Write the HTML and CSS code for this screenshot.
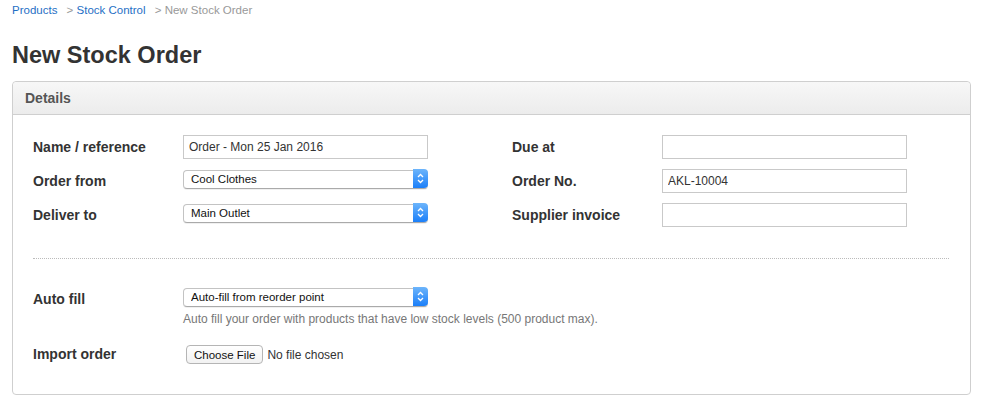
FILE: index.html
```html
<!DOCTYPE html>
<html>
<head>
<meta charset="utf-8">
<title>New Stock Order</title>
<link rel="stylesheet" href="styles.css">
</head>
<body>
<nav class="crumbs">
  <a class="crumb-link" href="#">Products</a>
  <span class="crumb"><span class="sep">&gt;</span> <a class="crumb-link" href="#">Stock Control</a></span>
  <span class="crumb current"><span class="sep">&gt;</span> New Stock Order</span>
</nav>
<h1 class="title">New Stock Order</h1>
<section class="panel">
  <header class="panel-head">Details</header>
  <div class="panel-body">
    <div class="grid">
      <div class="field">
        <label class="lbl">Name / reference</label>
        <input class="txt" type="text" value="Order - Mon 25 Jan 2016">
      </div>
      <div class="field">
        <label class="lbl">Due at</label>
        <input class="txt" type="text" value="">
      </div>
      <div class="field">
        <label class="lbl">Order from</label>
        <div class="sel"><select class="sel-box"><option>Cool Clothes</option></select><span class="sel-arrow"><svg width="7" height="11" viewBox="0 0 7 11"><path d="M1 4 L3.5 1.5 L6 4 M1 7 L3.5 9.5 L6 7" fill="none" stroke="#fff" stroke-width="1.3"/></svg></span></div>
      </div>
      <div class="field">
        <label class="lbl">Order No.</label>
        <input class="txt" type="text" value="AKL-10004">
      </div>
      <div class="field">
        <label class="lbl">Deliver to</label>
        <div class="sel"><select class="sel-box"><option>Main Outlet</option></select><span class="sel-arrow"><svg width="7" height="11" viewBox="0 0 7 11"><path d="M1 4 L3.5 1.5 L6 4 M1 7 L3.5 9.5 L6 7" fill="none" stroke="#fff" stroke-width="1.3"/></svg></span></div>
      </div>
      <div class="field">
        <label class="lbl">Supplier invoice</label>
        <input class="txt" type="text" value="">
      </div>
    </div>
    <hr class="divider">
    <div class="row">
      <label class="lbl lbl-row">Auto fill</label>
      <div class="ctl">
        <div class="sel"><select class="sel-box"><option>Auto-fill from reorder point</option></select><span class="sel-arrow"><svg width="7" height="11" viewBox="0 0 7 11"><path d="M1 4 L3.5 1.5 L6 4 M1 7 L3.5 9.5 L6 7" fill="none" stroke="#fff" stroke-width="1.3"/></svg></span></div>
        <p class="help">Auto fill your order with products that have low stock levels (500 product max).</p>
      </div>
    </div>
    <div class="row row-import">
      <label class="lbl lbl-row lbl-import">Import order</label>
      <div class="ctl file">
        <button class="file-btn" type="button">Choose File</button>
        <span class="file-name">No file chosen</span>
      </div>
    </div>
  </div>
</section>
</body>
</html>
```

FILE: styles.css
```css
html, body {
  margin: 0;
  padding: 0;
  background: #fff;
}
body {
  font-family: "Liberation Sans", Arial, Helvetica, sans-serif;
  color: #333;
  padding: 0 12px;
}
.crumbs {
  margin-top: 3px;
  height: 14px;
  line-height: 14px;
  font-size: 11.5px;
  white-space: nowrap;
}
.crumb-link {
  color: #1f6fc5;
  text-decoration: none;
}
.crumb {
  margin-left: 6px;
}
.sep {
  color: #999;
}
.current {
  color: #999;
}
.title {
  margin: 24px 0 0 0;
  font-size: 23.5px;
  line-height: 28px;
  font-weight: bold;
  color: #333;
}
.panel {
  margin-top: 12px;
  width: 959px;
  box-sizing: border-box;
  border: 1px solid #cfcfcf;
  border-radius: 4px;
}
.panel-head {
  height: 32px;
  line-height: 32px;
  padding-left: 12px;
  font-size: 14px;
  font-weight: bold;
  color: #555;
  background: linear-gradient(#f7f7f7, #ececec);
  border-bottom: 1px solid #cfcfcf;
  border-radius: 4px 4px 0 0;
}
.panel-body {
  padding: 20px 21px 30px 20px;
}
.grid {
  display: grid;
  grid-template-columns: 395px 395px;
  column-gap: 84px;
  row-gap: 10px;
}
.field {
  display: flex;
  height: 24px;
  align-items: flex-start;
}
.lbl {
  width: 150px;
  flex: 0 0 150px;
  font-size: 14px;
  font-weight: bold;
  line-height: 24px;
  color: #333;
}
.txt {
  width: 245px;
  height: 24px;
  box-sizing: border-box;
  margin: 0;
  border: 1px solid #c9c9c9;
  border-radius: 0;
  padding: 0 5px;
  font-family: "Liberation Sans", Arial, sans-serif;
  font-size: 12px;
  color: #333;
  background: #fff;
  outline: none;
}
.sel {
  position: relative;
  width: 245px;
  height: 19px;
}
.sel-box {
  appearance: none;
  -webkit-appearance: none;
  width: 245px;
  height: 19px;
  box-sizing: border-box;
  margin: 0;
  border: 1px solid #c3c3c3;
  border-bottom-color: #aaa;
  border-radius: 4px;
  padding: 0 20px 0 7px;
  font-family: "Liberation Sans", Arial, sans-serif;
  font-size: 11.5px;
  color: #111;
  background: #fff;
  box-shadow: 0 1px 0 rgba(0,0,0,0.06);
  outline: none;
}
.sel-arrow {
  position: absolute;
  right: 0;
  top: 0;
  width: 15px;
  height: 19px;
  border-radius: 0 4px 4px 0;
  background: linear-gradient(#6db5fb, #1b7ff9);
  display: flex;
  align-items: center;
  justify-content: center;
  pointer-events: none;
}
.divider {
  border: 0;
  border-top: 1px dotted #bbb;
  margin: 31px 0 28px 0;
  height: 0;
}
.row {
  display: flex;
  align-items: flex-start;
}
.lbl-row {
  line-height: 19px;
  padding-top: 3px;
}
.lbl-import {
  padding-top: 0;
}
.ctl {
  display: flex;
  flex-direction: column;
}
.help {
  margin: 6px 0 0 0;
  font-size: 12px;
  line-height: 14px;
  color: #777;
}
.row-import {
  margin-top: 19px;
}
.file {
  flex-direction: row;
  align-items: center;
  padding-left: 3px;
}
.file-btn {
  height: 19px;
  margin: 0;
  padding: 0 7px;
  font-family: "Liberation Sans", Arial, sans-serif;
  font-size: 11.5px;
  color: #111;
  background: linear-gradient(#fff, #f2f2f2);
  border: 1px solid #b5b5b5;
  border-radius: 4px;
}
.file-name {
  margin-left: 4px;
  font-size: 12px;
  color: #333;
}
```
